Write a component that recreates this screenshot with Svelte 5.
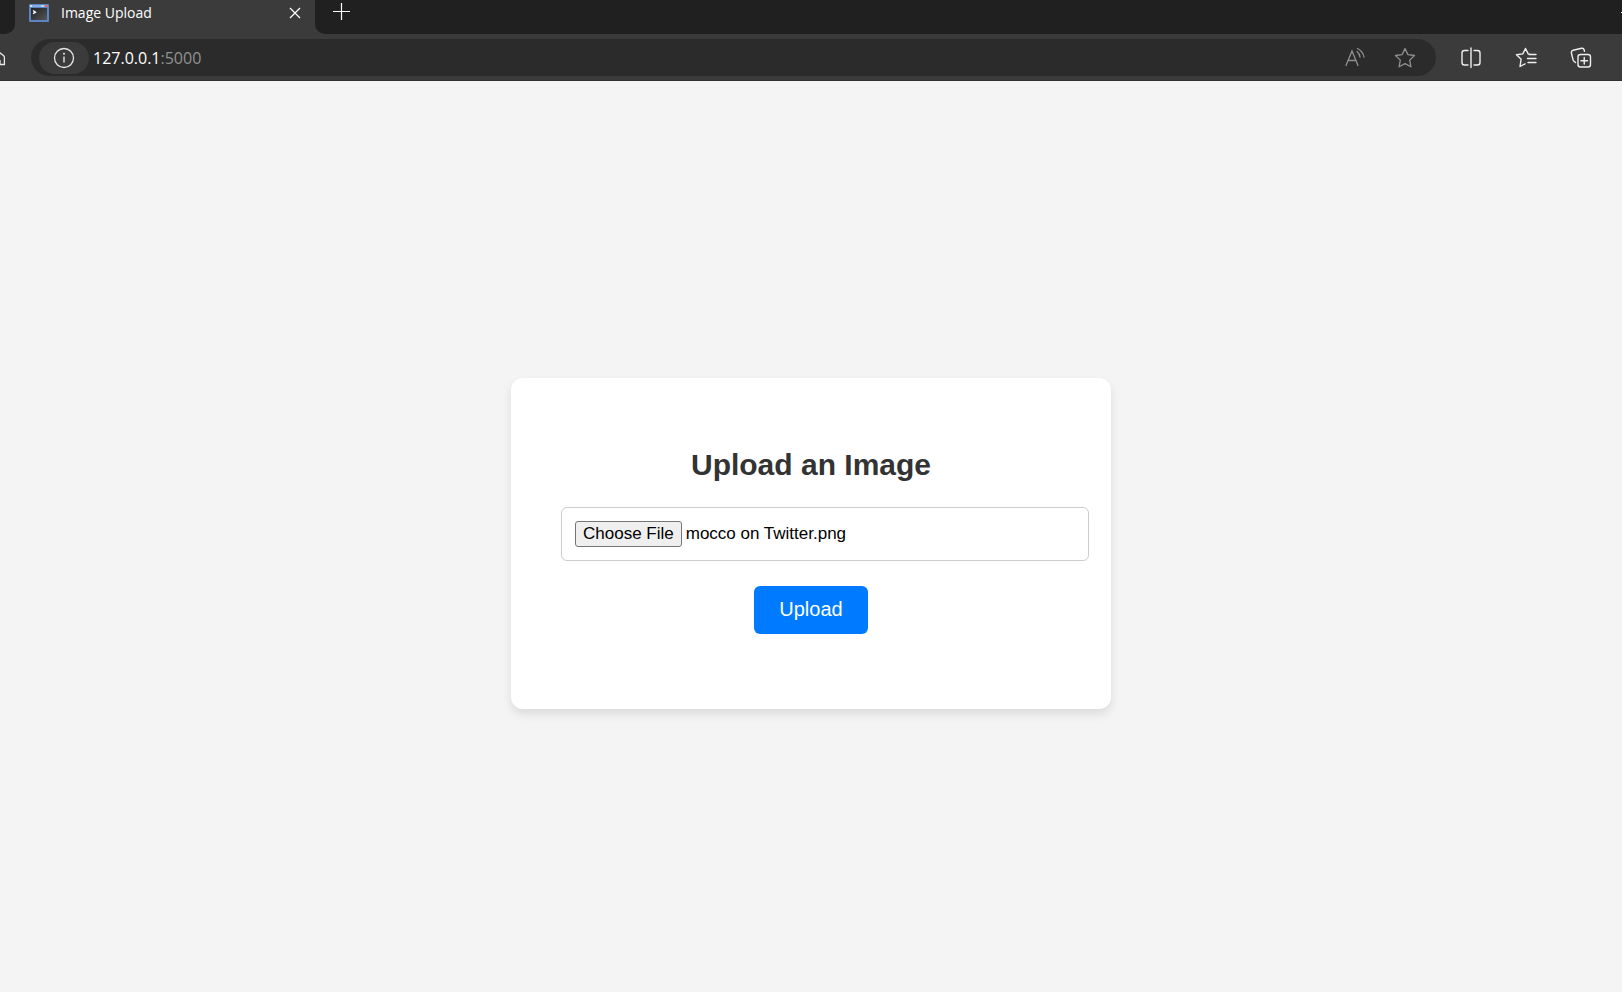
<script>
  import { onMount } from 'svelte';

  let fileInput;

  onMount(() => {
    const selection = new DataTransfer();
    selection.items.add(new File([''], 'mocco on Twitter.png', { type: 'image/png' }));
    fileInput.files = selection.files;
  });
</script>

<div class="window">
  <header>
    <div class="tabs">
      <div class="edge"></div>
      <div class="tab">
        <svg width="20" height="18" viewBox="0 0 20 18" aria-hidden="true">
          <defs>
            <linearGradient id="screen" x1="0" y1="0" x2="1" y2="1">
              <stop offset="0" stop-color="#222" />
              <stop offset="1" stop-color="#555" />
            </linearGradient>
          </defs>
          <rect width="20" height="18" rx="1" fill="#5b84c4" />
          <rect x="1" y="1" width="18" height="2" fill="#86ace0" />
          <rect x="1" y="1" width="2" height="2" fill="#c4dcf4" />
          <rect x="12" y="1" width="3" height="2" fill="#b9cff0" />
          <rect x="16" y="1" width="3" height="2" fill="#d2716c" />
          <rect x="2" y="4" width="16" height="12" fill="url(#screen)" />
          <path d="M4 6.5l2.500 1.700L4 9.700" fill="none" stroke="#fff" stroke-width="1.4" />
        </svg>
        <span class="title">Image Upload</span>
        <button aria-label="Close tab">
          <svg width="12" height="12" viewBox="0 0 12 12"><path d="M1 1l10 10M11 1L1 11" stroke="#fff" stroke-width="1.3" /></svg>
        </button>
      </div>
      <div class="strip">
        <button aria-label="New tab">
          <svg width="18" height="18" viewBox="0 0 18 18"><path d="M8.500 0v17M0 8.500h17" stroke="#fff" stroke-width="1.200" /></svg>
        </button>
        <span class="minimize"></span>
      </div>
    </div>

    <div class="toolbar">
      <button class="home" aria-label="Home">
        <svg width="6" height="20" viewBox="0 0 6 20"><path d="M-4 1.500L3.400 7.600q1 .8 1 2v6.900H0V12" fill="none" stroke="#e8e8e8" stroke-width="1.300" /></svg>
      </button>
      <div class="address">
        <button class="info" aria-label="View site information">
          <svg width="22" height="22" viewBox="0 0 22 22"><circle cx="11" cy="11" r="9.500" fill="none" stroke="#e6e6e6" stroke-width="1.300" /><path d="M11 9.500v6" stroke="#e6e6e6" stroke-width="1.400" /><circle cx="11" cy="6.800" r="1" fill="#e6e6e6" /></svg>
        </button>
        <div class="url" role="textbox" tabindex="0" contenteditable="true" aria-label="Address">127.0.0.1<span>:5000</span></div>
        <button aria-label="Read aloud">
          <svg width="22" height="22" viewBox="0 0 22 22" fill="none" stroke="#909090" stroke-width="1.300" stroke-linecap="round"><path d="M2 18.500L8 4l6 14.500M4.200 13.500h7.600M13 4.500q2.500 2 3 5.500M13.500 1.500q5.500 3 6.500 8.500" /></svg>
        </button>
        <button aria-label="Add to favorites">
          <svg width="22" height="22" viewBox="0 0 22 22"><path d="M11 1.500l2.900 6.100 6.600 .9-4.800 4.600 1.200 6.700L11 16.600l-5.900 3.200 1.200-6.700L1.500 8.500l6.600-.9z" fill="none" stroke="#909090" stroke-width="1.300" stroke-linejoin="round" /></svg>
        </button>
      </div>
      <div class="actions">
        <button aria-label="Split screen">
          <svg width="22" height="22" viewBox="0 0 22 22" fill="none" stroke="#eee" stroke-width="1.400" stroke-linecap="round"><path d="M8 3.500H4.500a2.500 2.500 0 0 0-2.500 2.500v9.500a2.500 2.500 0 0 0 2.500 2.500H8M14 3.500h3.500A2.500 2.500 0 0 1 20 6v9.500a2.500 2.500 0 0 1-2.500 2.500H14M11 1v19.500" /></svg>
        </button>
        <button aria-label="Favorites">
          <svg width="22" height="22" viewBox="0 0 22 22" fill="none" stroke="#eee" stroke-width="1.400" stroke-linecap="round" stroke-linejoin="round"><path d="M15 7.300l-1.800-.4L10.500 1.500 7.800 6.900 1.500 7.800l4.600 4.500L5 19.500l5-2.600M14 7.500h7M12.500 11.500H21M13 15.500h8" /></svg>
        </button>
        <button aria-label="Collections">
          <svg width="22" height="22" viewBox="0 0 22 22" fill="none" stroke="#eee" stroke-width="1.400" stroke-linecap="round" stroke-linejoin="round"><rect x="8" y="7.500" width="12.500" height="12.500" rx="2.500" /><path d="M14.250 10.500v6.500M11 13.750h6.500M5.500 15.500L4 14.200a3 3 0 0 1-1-1.600L1.400 6a2.200 2.200 0 0 1 1.700-2.700L11.500 1.300a2.200 2.200 0 0 1 2.600 1.500l.4 1.500" /></svg>
        </button>
      </div>
    </div>
  </header>

  <main>
    <form onsubmit={(event) => event.preventDefault()}>
      <h1>Upload an Image</h1>
      <input type="file" accept="image/*" aria-label="Image file" bind:this={fileInput} />
      <button type="submit">Upload</button>
    </form>
  </main>
</div>

<style>
  :global(body) {
    margin: 0;
  }

  .window {
    display: flex;
    flex-direction: column;
    min-height: 100vh;
    background: #f4f4f4;
    font-family: "Liberation Sans", Arial, sans-serif;
  }

  header {
    background: #3b3b3b;
    font-family: "Open Sans", "Noto Sans", sans-serif;
  }

  header button {
    display: flex;
    align-items: center;
    justify-content: center;
    padding: 0;
    border: 0;
    background: none;
    flex: none;
  }

  .tabs {
    display: flex;
    height: 34px;
  }

  .edge {
    width: 15px;
    background: #202020;
    border-bottom-right-radius: 10px;
  }

  .tab {
    display: flex;
    align-items: center;
    gap: 12px;
    box-sizing: border-box;
    width: 300px;
    padding: 0 14px 9px;
  }

  .title {
    flex: 1;
    color: #fff;
    font-size: 14px;
    line-height: 20px;
  }

  .strip {
    display: flex;
    flex: 1;
    align-items: center;
    justify-content: space-between;
    padding: 0 0 10px 18px;
    background: #202020;
    border-bottom-left-radius: 10px;
  }

  .minimize {
    width: 1px;
    height: 1px;
    background: #fff;
  }

  .toolbar {
    display: flex;
    align-items: center;
    box-sizing: border-box;
    height: 47px;
    padding-right: 30px;
    box-shadow: inset 0 -1px #303030;
  }

  .home {
    margin-right: 25px;
  }

  .address {
    display: flex;
    flex: 1;
    align-items: center;
    gap: 28px;
    box-sizing: border-box;
    height: 37px;
    padding: 0 20px 0 8px;
    border-radius: 19px;
    background: #2b2b2b;
  }

  .address .info {
    width: 50px;
    height: 32px;
    margin-right: -24px;
    border-radius: 16px;
    background: #3b3b3b;
  }

  .url {
    flex: 1;
    color: #fff;
    font-size: 16px;
    line-height: 24px;
    outline: 0;
  }

  .url span {
    color: #929292;
  }

  .actions {
    display: flex;
    gap: 33px;
    margin-left: 24px;
  }

  main {
    display: flex;
    flex: 1;
    align-items: center;
    justify-content: center;
    padding-top: 14px;
  }

  form {
    display: flex;
    flex-direction: column;
    align-items: center;
    box-sizing: border-box;
    width: 600px;
    padding: 50px 50px 75px;
    border-radius: 12px;
    background: #fff;
    box-shadow: 0 5px 10px rgba(0, 0, 0, 0.1);
  }

  h1 {
    margin: 20px 0 25px;
    color: #333;
    font-size: 30px;
    line-height: 34px;
  }

  input {
    align-self: flex-start;
    width: 100%;
    height: 26px;
    margin-bottom: 25px;
    padding: 13px;
    border: 1px solid #ccc;
    border-radius: 6px;
    color: #000;
    font-family: inherit;
    font-size: 17px;
    line-height: 24px;
  }

  input::file-selector-button {
    height: 26px;
    margin: 0 4px 0 0;
    padding: 0 7px;
    border: 1px solid #767676;
    border-radius: 3px;
    background: #efefef;
    color: #000;
    font-family: inherit;
    font-size: 17px;
  }

  form button {
    padding: 11px 25px 13px;
    border: 0;
    border-radius: 6px;
    background: #007bff;
    color: #fff;
    font-family: inherit;
    font-size: 20px;
    line-height: 24px;
  }
</style>
